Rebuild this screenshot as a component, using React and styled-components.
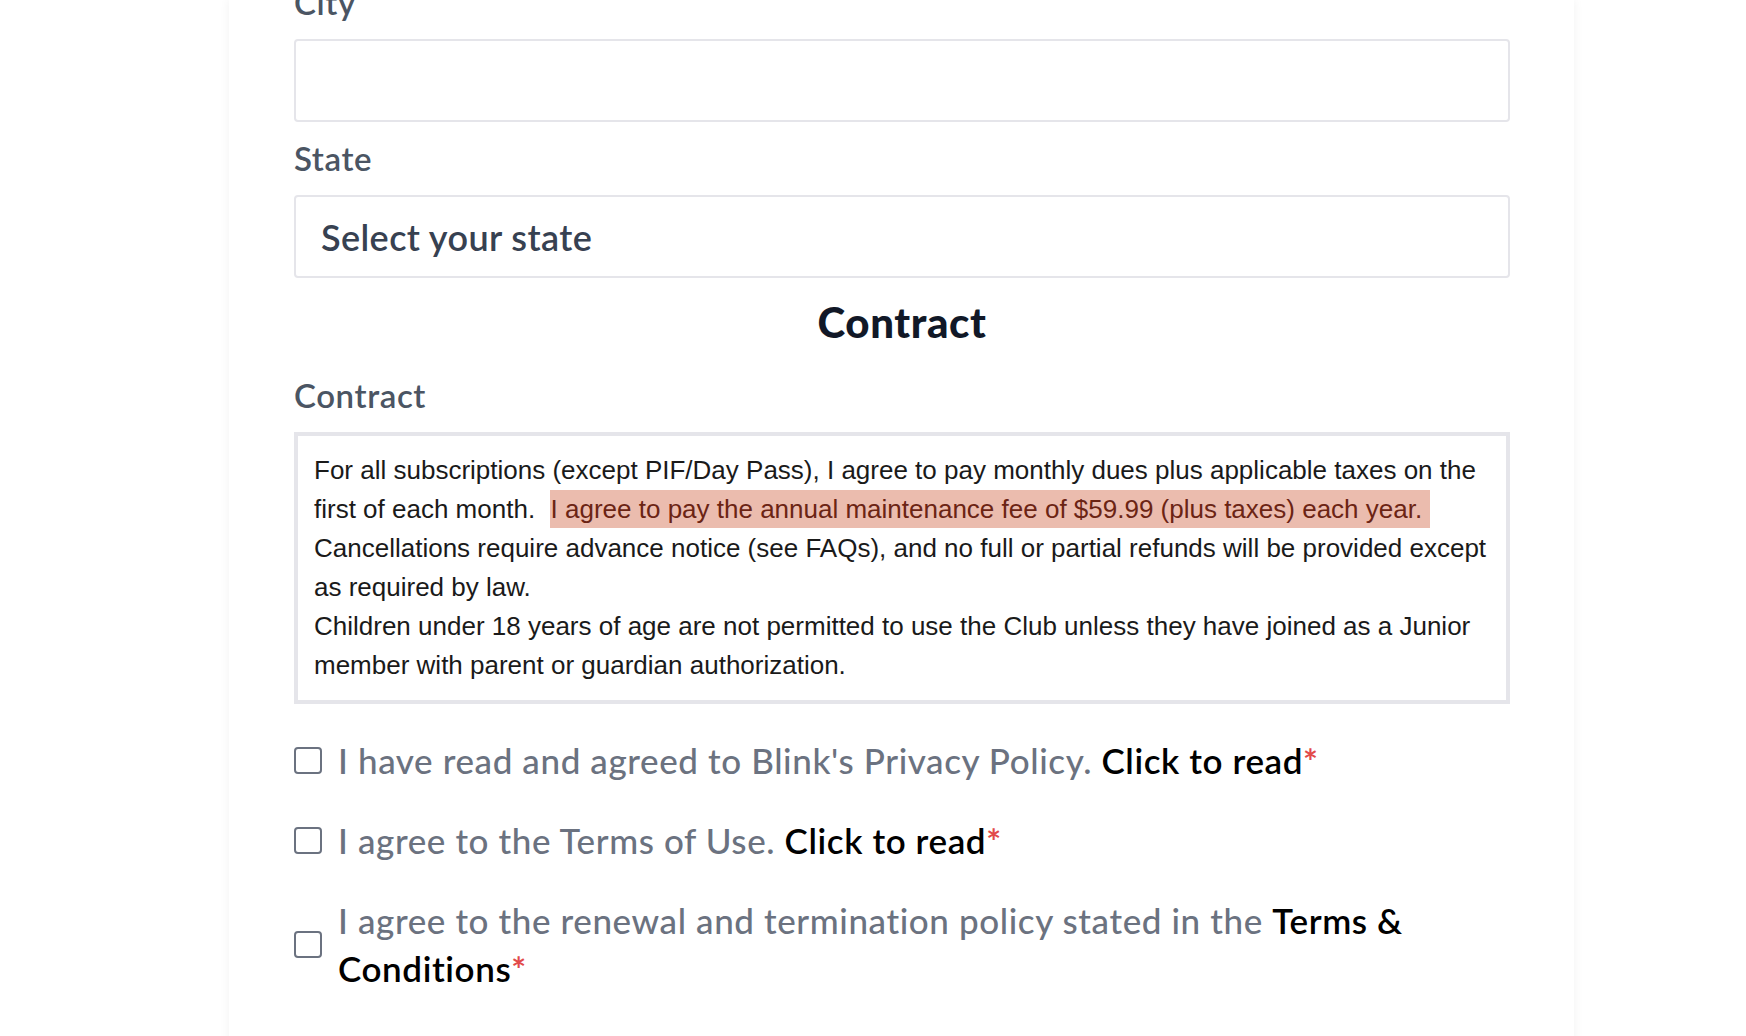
import styled, { createGlobalStyle } from 'styled-components'

// styles
const GlobalStyle = createGlobalStyle`
  html, body {
    margin: 0;
    padding: 0;
    background: #ffffff;
    overflow: hidden;
  }
  * {
    box-sizing: border-box;
  }
`

const Page = styled.div`
  min-height: 100vh;
  padding-left: 229px;
  font-family: Lato, "Noto Sans", sans-serif;
`

const Card = styled.div`
  width: 1345px;
  min-height: 1100px;
  padding: 0 64px 0 65px;
  background: #ffffff;
  box-shadow: 0 0 10px rgba(0, 0, 0, 0.06);
  display: flex;
  flex-direction: column;
`

const Field = styled.div`
  display: flex;
  flex-direction: column;
  margin-top: ${p => p.top || 0}px;
`

const Label = styled.label`
  font-size: 33px;
  line-height: 32px;
  font-weight: 600;
  letter-spacing: 0.6px;
  color: #4b5563;
  margin-bottom: 21px;
`

const Input = styled.input`
  height: 83px;
  width: 100%;
  border: 2px solid #e5e5ea;
  border-radius: 4px;
  background: #fff;
  outline: none;
`

const Select = styled.div`
  height: 83px;
  border: 2px solid #e5e5ea;
  border-radius: 4px;
  padding-left: 25px;
  display: flex;
  align-items: center;
  font-size: 36px;
  font-weight: 600;
  letter-spacing: 0.4px;
  color: #374151;
`

const Heading = styled.h2`
  margin: 24px 0 0;
  text-align: center;
  font-size: 42px;
  line-height: 40px;
  font-weight: 900;
  letter-spacing: 0.6px;
  color: #111827;
`

const ContractBox = styled.div`
  border: 4px solid #e5e5ea;
  padding: 15px 10px 15px 16px;
  font-family: "Liberation Sans", Arial, sans-serif;
  font-size: 26px;
  line-height: 39px;
  color: #1a1a1a;
`

const Highlight = styled.span`
  background: #ebbcae;
  color: #6b2414;
  padding: 4px 1px;
`

const Checks = styled.div`
  display: flex;
  flex-direction: column;
  gap: 32px;
  margin-top: 32px;
`

const CheckRow = styled.label`
  display: flex;
  align-items: center;
  gap: 16px;
`

const Box = styled.input`
  appearance: none;
  flex: none;
  width: 28px;
  height: 27px;
  margin: 0;
  border: 2px solid #6b7280;
  border-radius: 4px;
  background: #fff;
`

const CheckText = styled.span`
  font-size: 35px;
  line-height: 48px;
  font-weight: 500;
  letter-spacing: 0.6px;
  color: #6b7280;
`

const Link = styled.span`
  color: #000;
  font-weight: 600;
`

const Required = styled.span`
  color: #e24a4a;
  font-weight: 700;
`

function App() {
  return (
    <>
      <GlobalStyle />
      <Page>
        <Card>
          <Field top={-14}>
            <Label>City</Label>
            <Input type='text' />
          </Field>
          <Field top={20}>
            <Label>State</Label>
            <Select>Select your state</Select>
          </Field>
          <Heading>Contract</Heading>
          <Field top={37}>
            <Label>Contract</Label>
            <ContractBox>
              For all subscriptions (except PIF/Day Pass), I agree to pay monthly dues plus applicable taxes on the first of each month.{'\u00a0 '}
              <Highlight>I agree to pay the annual maintenance fee of $59.99 (plus taxes) each year.{'\u00a0'}</Highlight>{' '}
              Cancellations require advance notice (see FAQs), and no full or partial refunds will be provided except as required by law.
              <br />
              Children under 18 years of age are not permitted to use the Club unless they have joined as a Junior member with parent or guardian authorization.
            </ContractBox>
          </Field>
          <Checks>
            <CheckRow>
              <Box type='checkbox' />
              <CheckText>
                I have read and agreed to Blink's Privacy Policy. <Link>Click to read</Link><Required>*</Required>
              </CheckText>
            </CheckRow>
            <CheckRow>
              <Box type='checkbox' />
              <CheckText>
                I agree to the Terms of Use. <Link>Click to read</Link><Required>*</Required>
              </CheckText>
            </CheckRow>
            <CheckRow>
              <Box type='checkbox' />
              <CheckText>
                I agree to the renewal and termination policy stated in the <Link>Terms &amp; Conditions</Link><Required>*</Required>
              </CheckText>
            </CheckRow>
          </Checks>
        </Card>
      </Page>
    </>
  )
}

export default App
